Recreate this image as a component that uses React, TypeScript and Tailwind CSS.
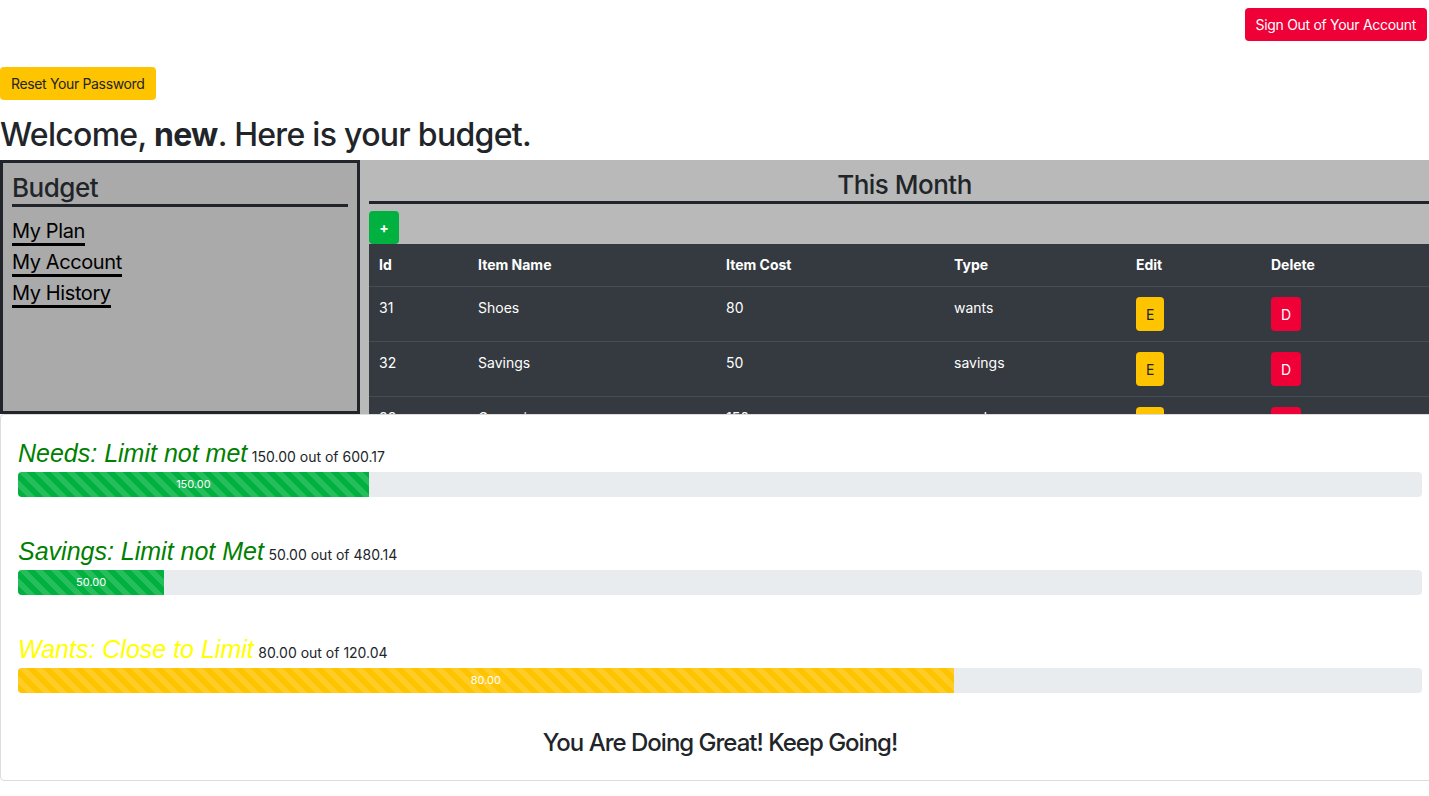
const items = [
  { id: 31, name: 'Shoes', cost: 80, type: 'wants' },
  { id: 32, name: 'Savings', cost: 50, type: 'savings' },
  { id: 33, name: 'Groceries', cost: 150, type: 'needs' },
];

const limits = [
  { label: 'Needs: Limit not met', spent: 150, limit: 600.17, tone: 'green' },
  { label: 'Savings: Limit not Met', spent: 50, limit: 480.14, tone: 'green' },
  { label: 'Wants: Close to Limit', spent: 80, limit: 120.04, tone: 'yellow' },
];

function LimitBar({ label, spent, limit, tone }: { label: string; spent: number; limit: number; tone: string }) {
  const pct = (spent / limit) * 100;
  return (
    <div>
      <div className="h-[30px] leading-[30px] mb-[4px] whitespace-nowrap">
        <span
          className={`italic text-[25px] leading-[30px] font-['Liberation_Sans',Arial,sans-serif] ${
            tone === 'green' ? 'text-[#008000]' : 'text-[#ffff00]'
          }`}
        >
          {label}
        </span>{' '}
        <span className="text-[14px] leading-[20px] text-[#212529]">
          {spent.toFixed(2)} out of {limit.toFixed(2)}
        </span>
      </div>
      <div className="h-[25px] rounded-[4px] bg-[#e9ecef] overflow-hidden flex">
        <div
          className={`h-full flex items-center justify-center text-white text-[11px] bg-[linear-gradient(45deg,rgba(255,255,255,.15)_25%,transparent_25%,transparent_50%,rgba(255,255,255,.15)_50%,rgba(255,255,255,.15)_75%,transparent_75%,transparent)] bg-[length:16px_16px] ${
            tone === 'green' ? 'bg-[#00b140]' : 'bg-[#ffc400]'
          }`}
          style={{ width: `${pct}%` }}
        >
          {spent.toFixed(2)}
        </div>
      </div>
    </div>
  );
}

export default function App() {
  return (
    <div className="w-full min-h-[796px] overflow-hidden bg-white font-[Inter,'Noto_Sans',sans-serif] text-[#212529]">
      {/* top bar */}
      <div className="flex justify-end pt-[8px] pr-[2px]">
        <button className="h-[33px] px-[11px] rounded-[4px] bg-[#ef0037] text-white text-[14px] tracking-[-0.3px]">
          Sign Out of Your Account
        </button>
      </div>

      <div className="mt-[26px]">
        <button className="h-[33px] px-[11px] rounded-[4px] bg-[#ffc400] text-[#212529] text-[14px] tracking-[-0.35px]">
          Reset Your Password
        </button>
      </div>

      <h2 className="mt-[16px] mb-[6px] text-[32px] leading-[38px] font-medium tracking-[-0.7px] whitespace-nowrap">
        Welcome, <b className="font-bold">new</b>. Here is your budget.
      </h2>

      {/* main row */}
      <div className="flex h-[254px] w-[1440px]">
        <div className="w-[360px] shrink-0 border-[3px] border-[#212529] bg-[#aaaaaa] p-[9px]">
          <h3 className="text-[26px] leading-[32px] font-medium tracking-[-0.5px] border-b-[3px] border-[#212529] text-[#212529]">
            Budget
          </h3>
          <div className="mt-[12px] flex flex-col gap-[4px] items-start">
            {['My Plan', 'My Account', 'My History'].map((l) => (
              <a
                key={l}
                className="inline-block text-[20px] leading-[24px] tracking-[-0.4px] text-black border-b-[3px] border-black"
              >
                {l}
              </a>
            ))}
          </div>
        </div>

        <div className="flex-1 bg-[#b9b9b9] pl-[9px] overflow-hidden">
          <h3 className="pt-[9px] text-[26px] leading-[32px] font-medium tracking-[-0.5px] text-center border-b-[3px] border-[#212529]">
            This Month
          </h3>
          <button className="mt-[7px] h-[33px] w-[30px] rounded-[4px] bg-[#00b140] text-white text-[14px] font-bold">
            +
          </button>
          <table className="w-full bg-[#343a40] text-white text-[14px] leading-[21px] border-collapse">
            <thead>
              <tr className="border-b border-[#454d55] text-left">
                <th className="w-[99px] px-[10px] pt-[10px] pb-[11px] font-bold">Id</th>
                <th className="w-[248px] px-[10px] pt-[10px] pb-[11px] font-bold">Item Name</th>
                <th className="w-[228px] px-[10px] pt-[10px] pb-[11px] font-bold">Item Cost</th>
                <th className="w-[182px] px-[10px] pt-[10px] pb-[11px] font-bold">Type</th>
                <th className="w-[135px] px-[10px] pt-[10px] pb-[11px] font-bold">Edit</th>
                <th className="px-[10px] pt-[10px] pb-[11px] font-bold">Delete</th>
              </tr>
            </thead>
            <tbody>
              {items.map((it) => (
                <tr key={it.id} className="border-b border-[#454d55] align-top">
                  <td className="p-[10px]">{it.id}</td>
                  <td className="p-[10px]">{it.name}</td>
                  <td className="p-[10px]">{it.cost}</td>
                  <td className="p-[10px]">{it.type}</td>
                  <td className="p-[10px]">
                    <button className="h-[34px] px-[10px] rounded-[4px] bg-[#ffc400] text-[#212529] text-[14px]">E</button>
                  </td>
                  <td className="p-[10px]">
                    <button className="h-[34px] px-[10px] rounded-[4px] bg-[#ef0037] text-white text-[14px]">D</button>
                  </td>
                </tr>
              ))}
            </tbody>
          </table>
        </div>
      </div>

      {/* limits card */}
      <div className="w-[1440px] border border-[#dcdcdc] rounded-[4px] px-[17px] pt-[23px] pb-[23px]">
        <div className="flex flex-col gap-[39px]">
          {limits.map((l) => (
            <LimitBar key={l.label} {...l} />
          ))}
        </div>
        <h4 className="mt-[35px] text-center text-[24px] leading-[29px] font-medium tracking-[-1px]">
          You Are Doing Great! Keep Going!
        </h4>
      </div>
    </div>
  );
}
